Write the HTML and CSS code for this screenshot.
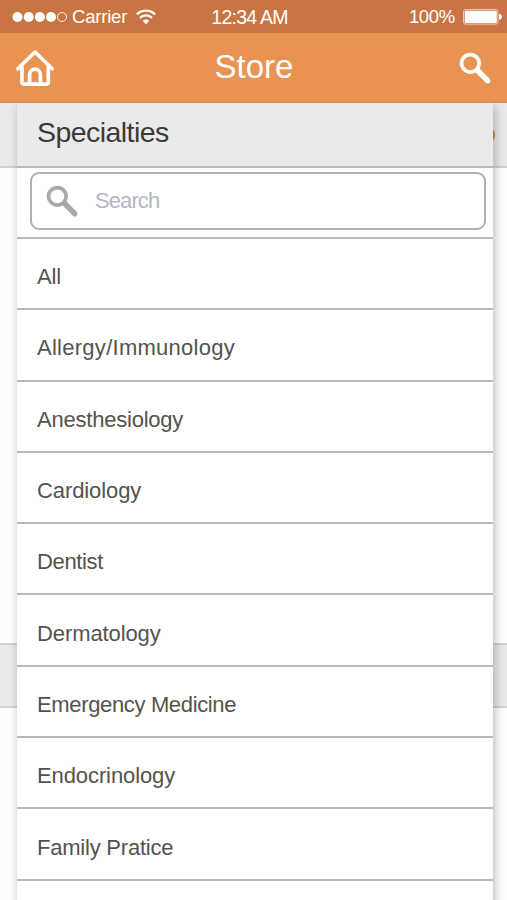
FILE: index.html
```html
<!DOCTYPE html>
<html lang="en">
<head>
<meta charset="utf-8">
<title>Store</title>
<link rel="stylesheet" href="styles.css">
</head>
<body>
<div class="screen">
  <div class="status">
    <div class="status-left">
      <svg class="dots" viewBox="0 0 56 12" fill="#fff"><circle cx="5.5" cy="6" r="5"/><circle cx="16.7" cy="6" r="5"/><circle cx="27.8" cy="6" r="5"/><circle cx="39" cy="6" r="5"/><circle cx="50" cy="6" r="4.5" fill="none" stroke="#fff" stroke-width=".9"/></svg>
      <span class="carrier">Carrier</span>
      <svg class="wifi" viewBox="0 0 20 16" fill="none" stroke="#fff" stroke-width="2.2"><path d="M.9 5.4a13 13 0 0 1 18.2 0M4 8.9a8.5 8.5 0 0 1 12 0"/><path d="M6.7 11.8a4.7 4.7 0 0 1 6.6 0L10 15.2z" fill="#fff" stroke="none"/></svg>
    </div>
    <span class="time">12:34 AM</span>
    <div class="status-right">
      <span class="percent">100%</span>
      <svg class="battery" viewBox="0 0 40 16"><rect x=".5" y=".5" width="34.5" height="14.6" rx="2" fill="none" stroke="#f0c9b0"/><rect x="1.7" y="1.7" width="32.1" height="12.2" rx="1" fill="#fff"/><path d="M36 5c4 .4 4 5.400 0 5.800z" fill="#fff"/></svg>
    </div>
  </div>
  <header class="nav">
    <svg class="home" viewBox="0 0 40 38" fill="none" stroke="#fff" stroke-width="3.7" stroke-linecap="round" stroke-linejoin="round"><path d="M2.800 19.800 20 3 37.200 19.800"/><path d="M6.900 18v15a2.200 2.200 0 0 0 2.200 2.200h22a2.200 2.200 0 0 0 2.200-2.200V18"/><path d="M14.600 34.500v-8.500a5.300 5.800 0 0 1 10.800 0v8.500"/></svg>
    <h1>Store</h1>
    <svg class="find" viewBox="0 0 32 32" fill="none" stroke="#fff"><circle cx="11" cy="11" r="8.500" stroke-width="3.600"/><path d="M17.300 17.300L28 28" stroke-width="5.400"/><path d="M27 27l1 1" stroke-width="5" stroke-linecap="round"/></svg>
  </header>
  <main class="stage">
    <div class="backdrop">
      <div class="band band-top"><span class="badge"></span></div>
      <div class="band band-low"></div>
    </div>
    <section class="panel">
      <h2><span>Specialties</span></h2>
      <div class="search-wrap">
        <div class="search">
          <svg class="find-sm" viewBox="0 0 32 32" fill="none" stroke="#a9a9ac"><circle cx="11" cy="11" r="8.500" stroke-width="3.600"/><path d="M17.300 17.300L28 28" stroke-width="5.400"/><path d="M27 27l1 1" stroke-width="5" stroke-linecap="round"/></svg>
          <span>Search</span>
        </div>
      </div>
      <ul class="list">
        <li>All</li>
        <li class="wide">Allergy/Immunology</li>
        <li class="snug">Anesthesiology</li>
        <li>Cardiology</li>
        <li class="tight">Dentist</li>
        <li>Dermatology</li>
        <li class="tight">Emergency Medicine</li>
        <li>Endocrinology</li>
        <li class="snug">Family Pratice</li>
        <li></li>
      </ul>
    </section>
  </main>
</div>
</body>
</html>
```

FILE: styles.css
```css
* { box-sizing: border-box; }
body { margin: 0; font-family: "Liberation Sans", Arial, sans-serif; background: #fff; }
.screen { width: 507px; height: 900px; overflow: hidden; display: flex; flex-direction: column; }
.status {
  height: 33px; flex: none; background: #c97543; color: #fff;
  display: grid; grid-template-columns: 1fr auto 1fr; align-items: center;
  padding: 0 4px 0 12px; font-size: 18.500px; line-height: 32px;
}
.status-left, .status-right { display: flex; align-items: center; }
.status-right { justify-content: flex-end; }
.dots { width: 56px; height: 12px; margin-top: 1px; }
.carrier { margin-left: 4px; letter-spacing: -.2px; padding-top: 1px; }
.wifi { width: 20px; height: 16px; margin-left: 9px; }
.time { font-size: 19.500px; letter-spacing: -.75px; margin-right: 16px; }
.percent { letter-spacing: -.3px; padding-top: 1px; }
.battery { width: 40px; height: 16px; margin-left: 8px; }
.nav {
  height: 70px; flex: none; background: #e89352; color: #fff;
  display: flex; align-items: center; justify-content: space-between;
  padding: 0 15px 0 15px; border-bottom: 1px solid #dc8a4d;
}
.home { width: 40px; height: 38px; margin-top: 1px; }
.nav h1 { margin: 0 6px 1px 0; font-size: 33px; font-weight: 400; line-height: 40px; }
.find { width: 33px; height: 33px; margin-top: 2px; }
.stage { flex: 1; display: grid; min-height: 0; overflow: hidden; }
.backdrop, .panel { grid-area: 1 / 1; }
.backdrop { display: flex; flex-direction: column; }
.band { height: 65px; flex: none; background: #eaeaec; border-bottom: 2px solid #d2d2d5; }
.band-top { display: flex; justify-content: flex-end; align-items: center; padding-right: 12px; }
.badge { width: 18px; height: 18px; border-radius: 50%; background: #d97c3b; }
.band-low { margin-top: 475px; border-top: 2px solid #d2d2d5; }
.panel {
  position: relative; width: 476px; margin-left: 17px; background: #fff;
  box-shadow: 2px 3px 10px rgba(60, 75, 90, .38);
}
.panel h2 {
  margin: 0; height: 65px; background: #eaeaec; border-bottom: 2px solid #b9b9b9;
  padding-left: 20px; font-size: 28.500px; font-weight: 400; line-height: 59px;
  letter-spacing: -.55px; color: #3a3a37;
}
.search-wrap { height: 71px; padding: 4px 7px 8px 13px; border-bottom: 2px solid #b9b9b9; }
.search {
  height: 58px; border: 2px solid #b0b0b3; border-radius: 9px;
  display: flex; align-items: center; padding-left: 14px;
}
.find-sm { width: 33px; height: 33px; margin-top: 1px; }
.search span { margin: 0 0 1px 16px; font-size: 22px; letter-spacing: -.9px; color: #b3b8c2; }
.list { list-style: none; margin: 0; padding: 0; }
.list li {
  height: 71.300px; padding: 7px 0 0 20px; border-bottom: 2px solid #b9b9b9;
  display: flex; align-items: center; font-size: 22px; letter-spacing: -.1px; color: #53534e;
}
.list .wide { letter-spacing: .27px; }
.list .snug { letter-spacing: -.22px; }
.list .tight { letter-spacing: -.35px; }
```
